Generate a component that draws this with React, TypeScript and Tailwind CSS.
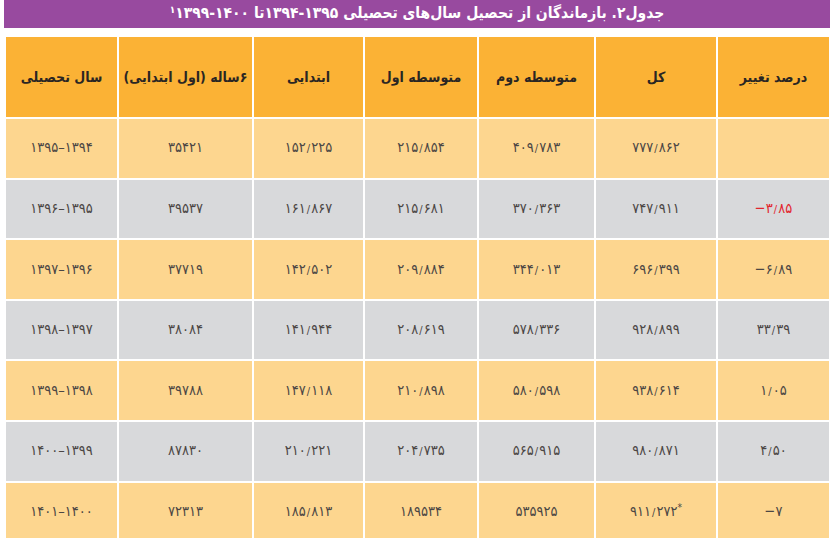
import React from 'react';

const headers = ['درصد تغییر', 'کل', 'متوسطه دوم', 'متوسطه اول', 'ابتدایی', '۶ساله (اول ابتدایی)', 'سال تحصیلی'];

const rows: string[][] = [
  ['', '۷۷۷/۸۶۲', '۴۰۹/۷۸۳', '۲۱۵/۸۵۴', '۱۵۲/۲۲۵', '۳۵۴۲۱', '۱۳۹۵–۱۳۹۴'],
  ['−۳/۸۵', '۷۴۷/۹۱۱', '۳۷۰/۳۶۳', '۲۱۵/۶۸۱', '۱۶۱/۸۶۷', '۳۹۵۳۷', '۱۳۹۶–۱۳۹۵'],
  ['−۶/۸۹', '۶۹۶/۳۹۹', '۳۴۴/۰۱۳', '۲۰۹/۸۸۴', '۱۴۲/۵۰۲', '۳۷۷۱۹', '۱۳۹۷–۱۳۹۶'],
  ['۳۳/۳۹', '۹۲۸/۸۹۹', '۵۷۸/۳۳۶', '۲۰۸/۶۱۹', '۱۴۱/۹۴۴', '۳۸۰۸۴', '۱۳۹۸–۱۳۹۷'],
  ['۱/۰۵', '۹۳۸/۶۱۴', '۵۸۰/۵۹۸', '۲۱۰/۸۹۸', '۱۴۷/۱۱۸', '۳۹۷۸۸', '۱۳۹۹–۱۳۹۸'],
  ['۴/۵۰', '۹۸۰/۸۷۱', '۵۶۵/۹۱۵', '۲۰۴/۷۳۵', '۲۱۰/۲۲۱', '۸۷۸۳۰', '۱۴۰۰–۱۳۹۹'],
  ['−۷', '۹۱۱/۲۷۲*', '۵۳۵۹۲۵', '۱۸۹۵۳۴', '۱۸۵/۸۱۳', '۷۲۳۱۳', '۱۴۰۱–۱۴۰۰'],
];

const Cell: React.FC<{ value: string }> = ({ value }) => {
  const star = value.endsWith('*');
  const text = star ? value.slice(0, -1) : value;
  return (
    <span dir="ltr" className="tracking-[0.5px]">
      {text.split('/').map((part, k) => (
        <React.Fragment key={k}>
          {k > 0 && <span className="text-[11px] mx-[1px]">/</span>}
          {part}
        </React.Fragment>
      ))}
      {star && <sup className="text-[10px]">*</sup>}
    </span>
  );
};

const App: React.FC = () => {
  return (
    <div
      dir="rtl"
      className="w-[834px] h-[538px] overflow-hidden bg-white"
      style={{ fontFamily: '"DejaVu Sans Condensed", "DejaVu Sans", sans-serif' }}
    >
      <div className="mx-[4px] h-[28px] bg-[#984a9f] flex items-center justify-center text-white font-bold text-[15.5px] leading-none">
        <span>
          جدول۲. بازماندگان از تحصیل سال‌های تحصیلی <bdi dir="ltr">۱۳۹۴-۱۳۹۵</bdi>تا <bdi dir="ltr">۱۳۹۹-۱۴۰۰</bdi>
          <sup className="text-[10px]">۱</sup>
        </span>
      </div>

      <div className="mt-[9px] mr-[5px] w-[823px] grid grid-cols-[111px_120px_115px_112px_109px_133px_111px] grid-rows-[80px_repeat(7,58.6px)] gap-[2px]">
        {headers.map((h) => (
          <div
            key={h}
            className="bg-[#fbb235] flex items-center justify-center text-[14px] font-bold text-[#2a2623]"
          >
            {h}
          </div>
        ))}
        {rows.map((row, i) =>
          row.map((cell, j) => (
            <div
              key={`${i}-${j}`}
              className={`flex items-center justify-center text-[14.5px] ${
                i % 2 === 0 ? 'bg-[#fdd68f]' : 'bg-[#d8d9db]'
              } ${i === 1 && j === 0 ? 'text-[#e2252d]' : 'text-[#4b4644]'}`}
            >
              <Cell value={cell} />
            </div>
          ))
        )}
      </div>
    </div>
  );
};

export default App;
